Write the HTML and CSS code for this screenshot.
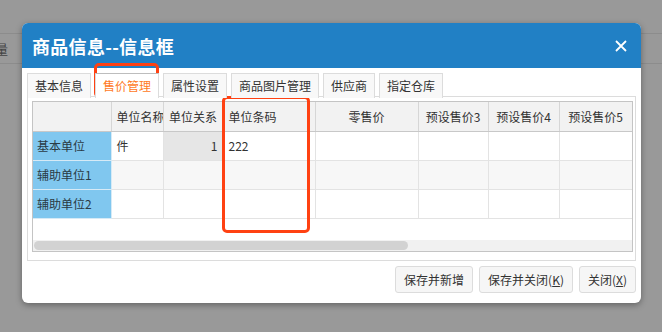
FILE: index.html
```html
<!DOCTYPE html>
<html>
<head>
<meta charset="utf-8">
<link rel="stylesheet" href="styles.css">
</head>
<body>
<div class="bgpage">
  <div class="bgbar"><span class="bgtext">量</span></div>
</div>

<div class="dialog">
  <div class="dlg-head">
    <span class="dlg-title">商品信息--信息框</span>
    <svg class="dlg-close" width="12" height="12" viewBox="0 0 12 12"><path d="M1 1L11 11M11 1L1 11" stroke="#fff" stroke-width="1.8" fill="none"/></svg>
  </div>
  <div class="dlg-body">
    <div class="tabs">
      <div class="tab">基本信息</div>
      <div class="tab active">售价管理</div>
      <div class="tab">属性设置</div>
      <div class="tab">商品图片管理</div>
      <div class="tab">供应商</div>
      <div class="tab">指定仓库</div>
    </div>
    <div class="panel">
      <div class="grid">
        <div class="grid-view">
          <table class="gtable">
            <colgroup>
              <col class="c0"><col class="c1"><col class="c2"><col class="c3"><col class="c4"><col class="c5"><col class="c6"><col class="c7">
            </colgroup>
            <thead>
              <tr>
                <th></th>
                <th class="left">单位名称</th>
                <th>单位关系</th>
                <th class="left">单位条码</th>
                <th>零售价</th>
                <th>预设售价3</th>
                <th>预设售价4</th>
                <th>预设售价5</th>
              </tr>
            </thead>
            <tbody>
              <tr>
                <td class="rh">基本单位</td>
                <td>件</td>
                <td class="ro">1</td>
                <td>222</td>
                <td></td><td></td><td></td><td></td>
              </tr>
              <tr class="alt">
                <td class="rh">辅助单位1</td>
                <td></td><td></td><td></td><td></td><td></td><td></td><td></td>
              </tr>
              <tr>
                <td class="rh">辅助单位2</td>
                <td></td><td></td><td></td><td></td><td></td><td></td><td></td>
              </tr>
            </tbody>
          </table>
        </div>
        <div class="hscroll"><div class="thumb"></div></div>
      </div>
    </div>
    <div class="footer">
      <button class="btn">保存并新增</button>
      <button class="btn">保存并关闭(<u>K</u>)</button>
      <button class="btn">关闭(<u>X</u>)</button>
    </div>
  </div>
</div>

<div class="mark mark-tab"></div>
<div class="mark mark-col"></div>
</body>
</html>
```

FILE: styles.css
```css
* { box-sizing: border-box; }
html, body {
  margin: 0;
  padding: 0;
}
body {
  width: 662px;
  height: 332px;
  overflow: hidden;
  background: #999999;
  font-family: "Noto Sans CJK SC", "Noto Sans", sans-serif;
  font-size: 12px;
  color: #333;
  position: relative;
}

.bgpage { padding-top: 33px; }
.bgbar {
  height: 31px;
  border-top: 1px solid #8c8c8c;
  border-bottom: 1px solid #8c8c8c;
  display: flex;
  align-items: center;
}
.bgtext {
  margin-left: -5px;
  font-size: 13px;
  color: #444;
  line-height: 1;
}

.dialog {
  position: absolute;
  left: 22px;
  top: 23px;
  width: 619px;
  height: 280px;
  background: #fff;
  border-radius: 6px;
  box-shadow: 0 2px 6px rgba(0,0,0,0.35);
  overflow: hidden;
  display: flex;
  flex-direction: column;
}
.dlg-head {
  height: 45px;
  background: #2180c5;
  display: flex;
  align-items: center;
  justify-content: space-between;
  padding: 0 14px 0 10px;
}
.dlg-title {
  color: #fff;
  font-size: 18px;
  font-weight: bold;
  line-height: 1;
  letter-spacing: 0.3px;
}
.dlg-close { display: block; }

.dlg-body {
  padding: 5px 5px 0 5px;
  display: flex;
  flex-direction: column;
}
.tabs {
  display: flex;
  gap: 4px;
  height: 24px;
  position: relative;
  z-index: 1;
  margin-bottom: -1px;
}
.tab {
  height: 25px;
  padding: 0 7px;
  border: 1px solid #dcdcdc;
  border-bottom: none;
  background: #f8f8f8;
  line-height: 23px;
  color: #333;
  white-space: nowrap;
  min-width: 0;
}
.tab.active {
  background: #fff;
  color: #ff7a1e;
  border-top-color: #bdbdbd;
  height: 25px;
}
.panel {
  height: 165px;
  border: 1px solid #dcdcdc;
  padding: 4px 3px 0 4px;
}
.grid {
  width: 601px;
  height: 151px;
  border: 1px solid #c4c4c4;
  display: flex;
  flex-direction: column;
  overflow: hidden;
}
.grid-view {
  flex: 1;
  overflow: hidden;
  background: #fff;
}
.gtable {
  table-layout: fixed;
  border-collapse: collapse;
  width: 599px;
}
.c0 { width: 78px; }
.c1 { width: 52px; }
.c2 { width: 60px; }
.c3 { width: 92px; }
.c4 { width: 103px; }
.c5 { width: 70px; }
.c6 { width: 71px; }
.c7 { width: 73px; }

.gtable th {
  height: 29px;
  background: #f2f2f2;
  border-right: 1px solid #d6d6d6;
  border-bottom: 1px solid #c8c8c8;
  font-weight: normal;
  text-align: center;
  white-space: nowrap;
  overflow: hidden;
  padding: 0 3px;
  color: #333;
}
.gtable th.left { text-align: left; padding-left: 5px; }
.gtable td {
  height: 29px;
  border-right: 1px solid #e3e3e3;
  border-bottom: 1px solid #e3e3e3;
  padding: 0 5px;
  white-space: nowrap;
  overflow: hidden;
}
.gtable tr.alt td { background: #f7f7f7; }
.gtable tr td.rh {
  background: #80c7ef;
  border-right: 1px solid #d6eaf6;
  border-bottom: 1px solid #d6eaf6;
  padding-left: 4px;
  color: #2a3a44;
}
.gtable td.ro {
  background: #e6e6e6;
  text-align: right;
}

.hscroll {
  height: 11px;
  background: #f1f1f1;
  padding: 1px 1px;
}
.thumb {
  width: 374px;
  height: 9px;
  border-radius: 5px;
  background: #d2d2d2;
}

.footer {
  display: flex;
  justify-content: flex-end;
  gap: 6px;
  margin-top: 5px;
}
.btn {
  height: 27px;
  padding: 0 8px;
  border: 1px solid #dcdcdc;
  border-radius: 3px;
  background: #f6f6f6;
  font-family: "Noto Sans CJK SC", "Noto Sans", sans-serif;
  font-size: 12px;
  color: #333;
  line-height: 1;
}

.mark {
  position: absolute;
  border: 3px solid #ff4112;
  border-radius: 5px;
}
.mark-tab {
  left: 94px;
  top: 63px;
  width: 65px;
  height: 35px;
}
.mark-col {
  left: 222px;
  top: 96px;
  width: 88px;
  height: 137px;
}
```
